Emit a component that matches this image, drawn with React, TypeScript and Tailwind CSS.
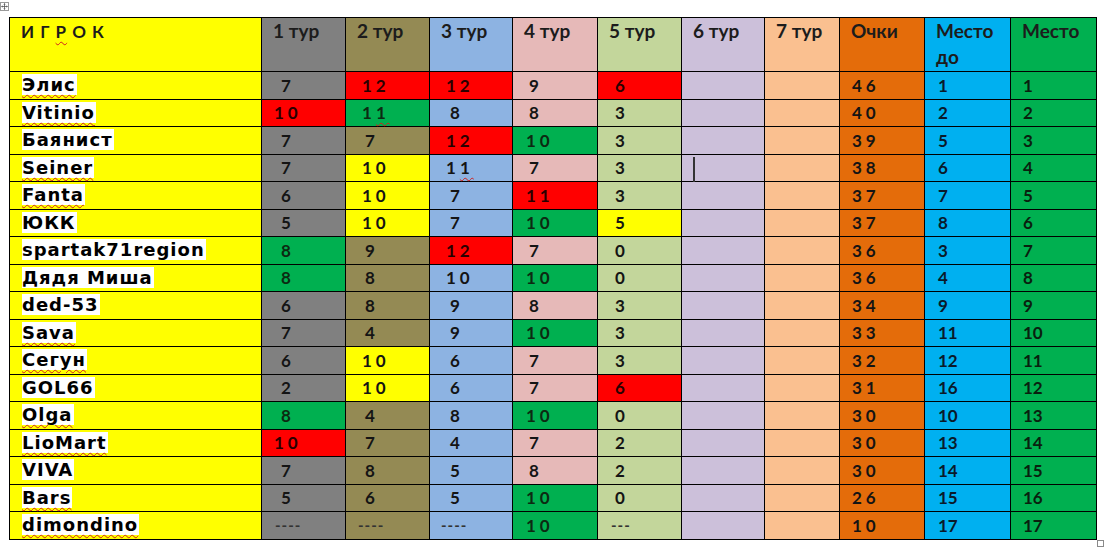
import React from "react"

type Tone = "R" | "G" | "Y" | undefined

interface Row {
  name: string
  spell?: boolean
  tours: [string, Tone][]
  points: string
  before: string
  place: string
}

const rows: Row[] = [
  { name: "Элис", spell: true, tours: [["7", undefined], ["12", "R"], ["12", "R"], ["9", undefined], ["6", "R"]], points: "46", before: "1", place: "1" },
  { name: "Vitinio", spell: true, tours: [["10", "R"], ["11", "G"], ["8", undefined], ["8", undefined], ["3", undefined]], points: "40", before: "2", place: "2" },
  { name: "Баянист", tours: [["7", undefined], ["7", undefined], ["12", "R"], ["10", "G"], ["3", undefined]], points: "39", before: "5", place: "3" },
  { name: "Seiner", spell: true, tours: [["7", undefined], ["10", "Y"], ["11", undefined], ["7", undefined], ["3", undefined]], points: "38", before: "6", place: "4" },
  { name: "Fanta", spell: true, tours: [["6", undefined], ["10", "Y"], ["7", undefined], ["11", "R"], ["3", undefined]], points: "37", before: "7", place: "5" },
  { name: "ЮКК", tours: [["5", undefined], ["10", "Y"], ["7", undefined], ["10", "G"], ["5", "Y"]], points: "37", before: "8", place: "6" },
  { name: "spartak71region", tours: [["8", "G"], ["9", undefined], ["12", "R"], ["7", undefined], ["0", undefined]], points: "36", before: "3", place: "7" },
  { name: "Дядя Миша", tours: [["8", "G"], ["8", undefined], ["10", undefined], ["10", "G"], ["0", undefined]], points: "36", before: "4", place: "8" },
  { name: "ded-53", tours: [["6", undefined], ["8", undefined], ["9", undefined], ["8", undefined], ["3", undefined]], points: "34", before: "9", place: "9" },
  { name: "Sava", spell: true, tours: [["7", undefined], ["4", undefined], ["9", undefined], ["10", "G"], ["3", undefined]], points: "33", before: "11", place: "10" },
  { name: "Сегун", spell: true, tours: [["6", undefined], ["10", "Y"], ["6", undefined], ["7", undefined], ["3", undefined]], points: "32", before: "12", place: "11" },
  { name: "GOL66", tours: [["2", undefined], ["10", "Y"], ["6", undefined], ["7", undefined], ["6", "R"]], points: "31", before: "16", place: "12" },
  { name: "Olga", spell: true, tours: [["8", "G"], ["4", undefined], ["8", undefined], ["10", "G"], ["0", undefined]], points: "30", before: "10", place: "13" },
  { name: "LioMart", spell: true, tours: [["10", "R"], ["7", undefined], ["4", undefined], ["7", undefined], ["2", undefined]], points: "30", before: "13", place: "14" },
  { name: "VIVA", tours: [["7", undefined], ["8", undefined], ["5", undefined], ["8", undefined], ["2", undefined]], points: "30", before: "14", place: "15" },
  { name: "Bars", spell: true, tours: [["5", undefined], ["6", undefined], ["5", undefined], ["10", "G"], ["0", undefined]], points: "26", before: "15", place: "16" },
  { name: "dimondino", spell: true, tours: [["----", undefined], ["----", undefined], ["----", undefined], ["10", "G"], ["---", undefined]], points: "10", before: "17", place: "17" },
]

// default fill of each tour column, and where its text starts
const tourCols = [
  { bg: "bg-[#808080]", one: "pl-[19px]", two: "pl-[12px]", dash: "pl-[13px]" },
  { bg: "bg-[#948a54]", one: "pl-[19px]", two: "pl-[16px]", dash: "pl-[12px]" },
  { bg: "bg-[#8db3e2]", one: "pl-[20px]", two: "pl-[16px]", dash: "pl-[11px]" },
  { bg: "bg-[#e6b9b8]", one: "pl-[16px]", two: "pl-[13px]", dash: "pl-[13px]" },
  { bg: "bg-[#c3d69b]", one: "pl-[17px]", two: "pl-[14px]", dash: "pl-[13px]" },
]

const toneBg = { R: "bg-[#ff0000]", G: "bg-[#00b050]", Y: "bg-[#ffff00]" }

const calibri = "font-['Lato','Liberation_Sans',sans-serif]"
const verdana = "font-['DejaVu_Sans','Liberation_Sans',sans-serif]"
const wavy = "underline decoration-wavy decoration-[#d0201c] decoration-1 underline-offset-[3px]"

function TourCell({ value, tone, col, spellLast }: { value: string; tone: Tone; col: number; spellLast?: boolean }) {
  const c = tourCols[col]
  const bg = tone ? toneBg[tone] : c.bg
  const isDash = value.startsWith("-")
  const pad = isDash ? c.dash : value.length === 1 ? c.one : c.two
  const ink = tone === "R" ? "text-[#2a0000]" : tone === "G" ? "text-[#0c2a12]" : "text-[#141414]"

  if (isDash) {
    return (
      <td className={`${bg} ${pad} border border-black`}>
        <span className={`${calibri} text-[15px] font-bold tracking-[1px] text-[#333]`}>{value}</span>
      </td>
    )
  }

  return (
    <td className={`${bg} ${pad} border border-black`}>
      <span className={`${calibri} text-[17px] font-bold tracking-[4px] ${ink}`}>
        {spellLast && value.length === 2 ? (
          <>
            {value[0]}
            <span className={wavy}>{value[1]}</span>
          </>
        ) : (
          value
        )}
      </span>
    </td>
  )
}

function Header({ label, bg }: { label: React.ReactNode; bg: string }) {
  return (
    <th className={`${bg} border border-black pl-[11px] align-top text-left`}>
      <span className={`${calibri} text-[19px] font-bold leading-[25px] text-[#1c1c1c]`}>{label}</span>
    </th>
  )
}

export default function App() {
  return (
    <div className="relative min-h-[551px] w-[1108px] bg-white">
      {/* table move handle */}
      <svg className="absolute left-0 top-[2px]" width="9" height="9" viewBox="0 0 9 9">
        <rect x="0.5" y="0.5" width="8" height="8" fill="#fff" stroke="#9a9a9a" />
        <path d="M4.5 1.5v6M1.5 4.5h6" stroke="#555" strokeWidth="0.8" />
        <path d="M4.5 1.3l-1.2 1.2h2.4zM4.5 7.7l-1.2-1.2h2.4zM1.3 4.5l1.2-1.2v2.4zM7.7 4.5l-1.2-1.2v2.4z" fill="#555" />
      </svg>

      <div className="pl-[9px] pt-[17px]">
        <table className="w-[1087px] table-fixed border-collapse border border-black">
          <colgroup>
            <col className="w-[252px]" />
            <col className="w-[84px]" />
            <col className="w-[84px]" />
            <col className="w-[83px]" />
            <col className="w-[85px]" />
            <col className="w-[84px]" />
            <col className="w-[83px]" />
            <col className="w-[75px]" />
            <col className="w-[85px]" />
            <col className="w-[86px]" />
            <col className="w-[86px]" />
          </colgroup>
          <thead>
            <tr className="h-[54px]">
              <Header
                bg="bg-[#ffff00]"
                label={
                  <span className="text-[17px] tracking-[1px]">
                    И Г <span className={wavy}>Р</span> О К
                  </span>
                }
              />
              <Header bg="bg-[#808080]" label="1 тур" />
              <Header bg="bg-[#948a54]" label="2 тур" />
              <Header bg="bg-[#8db3e2]" label="3 тур" />
              <Header bg="bg-[#e6b9b8]" label="4 тур" />
              <Header bg="bg-[#c3d69b]" label="5 тур" />
              <Header bg="bg-[#ccc0da]" label="6 тур" />
              <Header bg="bg-[#fac090]" label="7 тур" />
              <Header bg="bg-[#e46c0a]" label="Очки" />
              <Header
                bg="bg-[#00b0f0]"
                label={
                  <>
                    Место
                    <br />
                    до
                  </>
                }
              />
              <Header bg="bg-[#00b050]" label="Место" />
            </tr>
          </thead>
          <tbody>
            {rows.map((row, i) => (
              <tr key={row.name} className="h-[27.5px]">
                <td className="border border-black bg-[#ffff00] pl-[12px]">
                  <span className={`${verdana} bg-white pr-[1px] text-[18px] font-bold leading-[23px] tracking-[1px] text-black ${row.spell ? wavy : ""}`}>
                    {row.name}
                  </span>
                </td>
                {row.tours.map(([v, tone], col) => (
                  <TourCell
                    key={col}
                    value={v}
                    tone={tone}
                    col={col}
                    spellLast={(i === 1 && col === 1) || (i === 3 && col === 2)}
                  />
                ))}
                <td className="border border-black bg-[#ccc0da] pl-[11px]">
                  {i === 3 && <span className="inline-block h-[25px] w-[2px] translate-y-[1px] bg-[#333] align-middle" />}
                </td>
                <td className="border border-black bg-[#fac090]" />
                <td className="border border-black bg-[#e46c0a] pl-[12px]">
                  <span className={`${calibri} text-[17px] font-bold tracking-[4px] text-[#141414]`}>{row.points}</span>
                </td>
                <td className="border border-black bg-[#00b0f0] pl-[13px]">
                  <span className={`${calibri} text-[17px] font-bold text-[#0a1a2a]`}>{row.before}</span>
                </td>
                <td className="border border-black bg-[#00b050] pl-[12px]">
                  <span className={`${calibri} text-[17px] font-bold text-[#0a1f0f]`}>{row.place}</span>
                </td>
              </tr>
            ))}
          </tbody>
        </table>
      </div>

      {/* table resize handle */}
      <div className="absolute left-[1097px] top-[540px] h-[7px] w-[7px] border border-[#8a8a8a] bg-white" />
    </div>
  )
}
